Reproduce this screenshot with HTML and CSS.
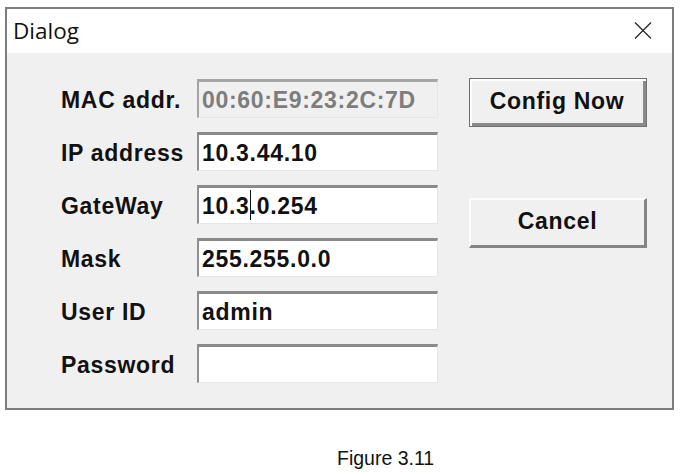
FILE: index.html
```html
<!DOCTYPE html>
<html>
<head>
<meta charset="utf-8">
<link rel="stylesheet" href="styles.css">
</head>
<body>
<div class="dialog">
  <div class="titlebar">
    <span class="title">Dialog</span>
    <svg class="close" width="18" height="17" viewBox="0 0 18 17"><path d="M1 0.5 L17 16.5 M17 0.5 L1 16.5" stroke="#222" stroke-width="1.2" fill="none"/></svg>
  </div>
  <div class="body">
    <div class="form">
      <div class="label">MAC addr.</div>
      <div class="field disabled">00:60:E9:23:2C:7D</div>
      <div class="label">IP address</div>
      <div class="field">10.3.44.10</div>
      <div class="label">GateWay</div>
      <div class="field">10.3<span class="caret"></span>.0.254</div>
      <div class="label">Mask</div>
      <div class="field">255.255.0.0</div>
      <div class="label">User ID</div>
      <div class="field">admin</div>
      <div class="label">Password</div>
      <div class="field"></div>
    </div>
    <div class="buttons">
      <div class="btn default">Config Now</div>
      <div class="btn cancel">Cancel</div>
    </div>
  </div>
</div>
<div class="caption">Figure 3.11</div>
</body>
</html>
```
FILE: styles.css
```css
html, body {
  margin: 0;
  padding: 0;
  background: #fff;
}
body {
  width: 685px;
  height: 473px;
  overflow: hidden;
}
.dialog {
  box-sizing: border-box;
  margin: 7px 0 0 5px;
  width: 669px;
  height: 403px;
  border: 2px solid #7d7d7d;
  display: flex;
  flex-direction: column;
}
.titlebar {
  height: 44px;
  background: #fff;
  display: flex;
  align-items: center;
  justify-content: space-between;
  padding: 0 20px 0 6px;
  flex: none;
}
.title {
  font-family: "Open Sans", "Noto Sans", sans-serif;
  font-size: 22.5px;
  color: #111;
  margin-top: -2px;
}
.close {
  display: block;
  margin-top: -2px;
}
.body {
  flex: 1;
  background: #f0f0f0;
  display: flex;
  padding: 26px 0 0 54px;
  font-family: "Liberation Sans", Arial, sans-serif;
  font-weight: bold;
  font-size: 23px;
  letter-spacing: 0.7px;
  color: #111;
}
.form {
  display: grid;
  grid-template-columns: 136px 241px;
  grid-auto-rows: 39px;
  row-gap: 14px;
  align-self: flex-start;
}
.label {
  display: flex;
  align-items: center;
  padding-top: 3px;
}
.field {
  box-sizing: border-box;
  background: #fff;
  border-top: 3px solid #8a8a8a;
  border-left: 2px solid #8f8f8f;
  border-right: 1px solid #e6e6e6;
  border-bottom: 1px solid #e6e6e6;
  padding: 2px 0 0 3px;
  display: flex;
  align-items: center;
  white-space: pre;
}
.field.disabled {
  background: #f0f0f0;
  color: #7d7d7d;
  border-top-color: #a5a5a5;
  border-left-color: #a5a5a5;
}
.caret {
  display: inline-block;
  width: 1px;
  height: 30px;
  background: #111;
  margin-right: -1px;
  margin-top: -4px;
}
.buttons {
  display: flex;
  flex-direction: column;
  margin-left: 31px;
  margin-top: -1px;
}
.btn {
  box-sizing: border-box;
  width: 178px;
  display: flex;
  align-items: center;
  justify-content: center;
  background: #f0f0f0;
}
.btn.default {
  height: 49px;
  border: 1px solid #707070;
  box-shadow: inset 2px 2px 0 #fdfdfd, inset -3px -3px 0 #8a8a8a;
  padding: 0 2px 2px 0;
}
.btn.cancel {
  height: 50px;
  margin-top: 71px;
  border-top: 2px solid #fcfcfc;
  border-left: 2px solid #fcfcfc;
  border-right: 3px solid #858585;
  border-bottom: 3px solid #858585;
  padding-bottom: 3px;
}
.caption {
  margin: 37px 0 0 337px;
  font-family: "Liberation Sans", Arial, sans-serif;
  font-size: 19.5px;
  line-height: 22px;
  color: #111;
}
```
